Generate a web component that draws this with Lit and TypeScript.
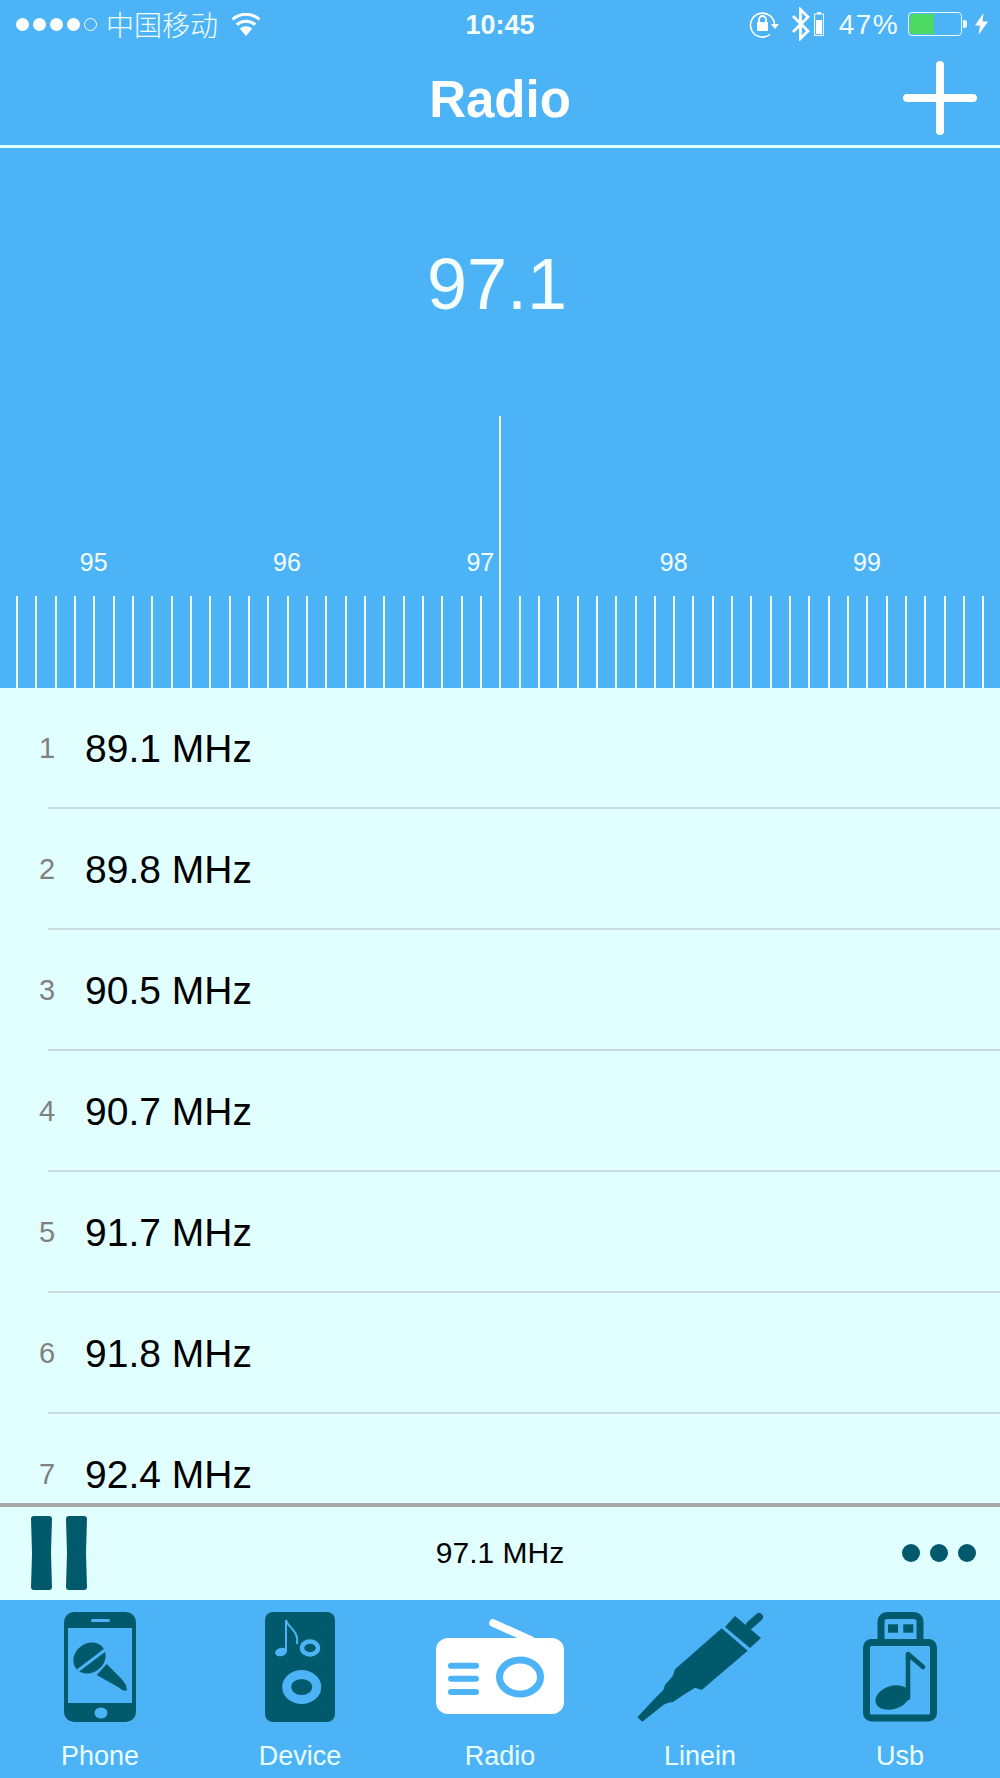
import { LitElement, html, css } from "lit";
import { customElement } from "lit/decorators.js";

const TEAL = "#005a6c";
const BLUE = "#4db3f7";

const stations = ["89.1", "89.8", "90.5", "90.7", "91.7", "91.8", "92.4"];
const scale = ["95", "96", "97", "98", "99"];

const phoneIcon = html`<svg width="72" height="110" viewBox="0 0 72 110">
  <rect width="72" height="110" rx="10" fill="${TEAL}"/>
  <rect x="4" y="16" width="64" height="75" fill="${BLUE}"/>
  <rect x="27" y="7" width="19" height="3" rx="1.5" fill="${BLUE}"/>
  <ellipse cx="37" cy="101" rx="6.5" ry="5.5" fill="${BLUE}"/>
  <path d="M42.7 52L32.7 63 54 75 59 78.5 63 78.5 62 73 58 67.5Z" fill="${TEAL}"/>
  <ellipse cx="25.5" cy="46" rx="17" ry="14.5" transform="rotate(-37 25.5 46)" fill="${TEAL}"/>
  <path d="M14 58.5L41 38" stroke="${BLUE}" stroke-width="3" fill="none"/>
</svg>`;

const deviceIcon = html`<svg width="70" height="110" viewBox="0 0 70 110">
  <rect width="70" height="110" rx="8" fill="${TEAL}"/>
  <ellipse cx="16" cy="40" rx="6" ry="4.2" transform="rotate(-15 16 40)" fill="${BLUE}"/>
  <path d="M21 40V8C23 16 34 18 32 32" stroke="${BLUE}" stroke-width="2" fill="none"/>
  <ellipse cx="45" cy="36" rx="8" ry="6.5" stroke="${BLUE}" stroke-width="4.5" fill="none"/>
  <ellipse cx="36.7" cy="75" rx="15" ry="12.5" stroke="${BLUE}" stroke-width="9" fill="none"/>
</svg>`;

const radioIcon = html`<svg width="128" height="96" viewBox="0 0 128 96">
  <path d="M57 4L95 21" stroke="#fff" stroke-width="7.5" stroke-linecap="round" fill="none"/>
  <rect y="19" width="128" height="76" rx="12" fill="#fff"/>
  <path d="M15 46.7H40M15 59.7H40M15 73H40" stroke="${BLUE}" stroke-width="6" stroke-linecap="round" fill="none"/>
  <ellipse cx="84" cy="58" rx="20.5" ry="17" stroke="${BLUE}" stroke-width="7" fill="none"/>
</svg>`;

const lineinIcon = html`<svg width="127" height="110" viewBox="0 0 127 110">
  <path d="M113 13L122 5" stroke="${TEAL}" stroke-width="8" stroke-linecap="round" fill="none"/>
  <path d="M98 4L124 26 113 36 88 15Z" fill="${TEAL}"/>
  <path d="M84.7 16.3L110.7 38.7 64.7 78 58 75.7 46.3 83 36.3 89.7 29.7 91.3 26.3 93 5.3 109.7 .3 105.3 18 86.3 26.3 78 28 73 35.7 64 38 57.3Z" fill="${TEAL}"/>
</svg>`;

const usbIcon = html`<svg width="74" height="110" viewBox="0 0 74 110">
  <rect x="18" y="3.5" width="39" height="32" rx="6" stroke="${TEAL}" stroke-width="7" fill="none"/>
  <rect x="25" y="12.3" width="10" height="8.4" fill="${TEAL}"/>
  <rect x="40.3" y="12.3" width="10" height="8.4" fill="${TEAL}"/>
  <rect x="3.5" y="30.5" width="67" height="75.5" rx="5" stroke="${TEAL}" stroke-width="7" fill="${BLUE}"/>
  <path d="M45 86V42L60 55" stroke="${TEAL}" stroke-width="4.6" stroke-linecap="round" stroke-linejoin="round" fill="none"/>
  <ellipse cx="29.5" cy="85.5" rx="17.5" ry="11.5" transform="rotate(-18 29.5 85.5)" fill="${TEAL}"/>
</svg>`;

const tabs = [
  { label: "Phone", icon: phoneIcon },
  { label: "Device", icon: deviceIcon },
  { label: "Radio", icon: radioIcon },
  { label: "Linein", icon: lineinIcon },
  { label: "Usb", icon: usbIcon },
];

const wifi = html`<svg width="30" height="23" viewBox="0 0 30 23">
  <path d="M15 23L8.8 15.6A9.5 9.5 0 0 1 21.2 15.6Z" fill="#fff"/>
  <path d="M5.8 11.6A14 14 0 0 1 24.2 11.6" stroke="#fff" stroke-width="3" fill="none"/>
  <path d="M1.5 6.4A20.5 20.5 0 0 1 28.5 6.4" stroke="#fff" stroke-width="3" fill="none"/>
</svg>`;

const lockIcon = html`<svg width="30" height="28" viewBox="0 0 30 28">
  <path d="M25.5 15.5A12 12 0 1 0 21 24.5" stroke="#fff" stroke-width="1.6" fill="none"/>
  <path d="M22 14H30L26 19Z" fill="#fff"/>
  <rect x="8" y="12" width="11" height="9" rx="1" fill="#fff"/>
  <path d="M10 12V9.5A3.5 3.5 0 0 1 17 9.5V12" stroke="#fff" stroke-width="1.8" fill="none"/>
</svg>`;

const btIcon = html`<svg width="20" height="34" viewBox="0 0 20 34">
  <path d="M2 9L17 24 9.5 31.5V2.5L17 10 2 25" stroke="#fff" stroke-width="2.8" fill="none"/>
</svg>`;

const miniBattery = html`<svg width="10" height="24" viewBox="0 0 10 24">
  <rect x="3" y="0" width="4" height="2" fill="#fff"/>
  <rect x=".6" y="2" width="8.8" height="21.4" fill="none" stroke="#fff" stroke-width="1"/>
  <rect x="2" y="8" width="6" height="14" fill="#fff"/>
</svg>`;

const bolt = html`<svg width="13" height="22" viewBox="0 0 13 22">
  <path d="M8.5 0L0 12.5H5L3.5 22 13 8.5H7.5Z" fill="#fff"/>
</svg>`;

const plus = html`<svg width="74" height="74" viewBox="0 0 74 74">
  <path d="M37 4V70M4 37H70" stroke="#fff" stroke-width="8" stroke-linecap="round" fill="none"/>
</svg>`;

const pause = html`<svg width="58" height="74" viewBox="0 0 58 74">
  <path d="M3 0H18C20 0 21 1 21 3L20 37 21 71C21 73 20 74 18 74H3C1 74 0 73 0 71L1 37 0 3C0 1 1 0 3 0Z" fill="${TEAL}"/>
  <path d="M38 0H53C55 0 56 1 56 3L55 37 56 71C56 73 55 74 53 74H38C36 74 35 73 35 71L36 37 35 3C35 1 36 0 38 0Z" fill="${TEAL}"/>
</svg>`;

@customElement("app-root")
export class AppRoot extends LitElement {
  static styles = css`
    :host {
      display: flex;
      flex-direction: column;
      width: 1000px;
      height: 1778px;
      overflow: hidden;
      background: #e2ffff;
      font-family: "Liberation Sans", Arial, sans-serif;
    }
    .top {
      background: #4db3f7;
      color: #fff;
      flex: none;
    }
    .status {
      display: grid;
      grid-template-columns: 1fr auto 1fr;
      align-items: center;
      height: 48px;
      padding: 0 13px;
      box-sizing: border-box;
      font-size: 28px;
      color: #eef;
    }
    .left, .right { display: flex; align-items: center; }
    .right { justify-content: flex-end; margin-right: -1px; }
    .signal { display: flex; gap: 4px; margin: 0 9px 0 3px; }
    .dot { width: 13px; height: 13px; border-radius: 50%; background: #fff; box-sizing: border-box; }
    .dot.off { background: none; border: 1px solid #fff; }
    .carrier { font-family: "Noto Sans CJK SC", sans-serif; font-weight: 300; font-size: 28px; line-height: 48px; color: #f2fdff; margin-right: 13px; }
    .clock { font-weight: 700; font-size: 27px; color: #f2fdff; padding-top: 2px; }
    .lock { margin-right: 12px; display: flex; }
    .bt { display: flex; margin-right: 3px; }
    .mini { display: flex; margin-right: 15px; }
    .pct { margin-right: 9px; color: #f2fdff; letter-spacing: 1.4px; padding-top: 2px; }
    .battery {
      width: 54px; height: 24px; border: 1px solid #e8fbff; border-radius: 4px;
      box-sizing: border-box; padding: 1px; margin-right: 1px;
    }
    .battery i { display: block; width: 24px; height: 100%; background: #4cd964; border-radius: 2px 0 0 2px; }
    .nub { width: 4px; height: 8px; background: #e8fbff; border-radius: 0 3px 3px 0; margin-right: 8px; }
    .nav {
      display: grid;
      grid-template-columns: 1fr auto 1fr;
      align-items: center;
      height: 95px;
      padding: 0 23px 2px;
      border-bottom: 3px solid #e2ffff;
    }
    .title { font-size: 51px; font-weight: 700; line-height: 95px; padding-top: 4px; }
    .plusbtn { justify-self: end; display: flex; }
    .tuner {
      position: relative;
      background: #4db3f7;
      height: 540px;
      flex: none;
      color: #f4feff;
      display: flex;
      flex-direction: column;
    }
    .freq { font-size: 72px; line-height: 80px; text-align: center; margin-top: 96px; padding-right: 6px; }
    .labels { display: flex; margin-top: 223px; height: 30px; }
    .labels span { flex: none; width: 193.33px; text-align: center; font-size: 25px; line-height: 30px; }
    .labels span:first-child { margin-left: -3px; }
    .ticks { display: flex; gap: 17.33px; padding-left: 16px; margin-top: 19px; height: 92px; overflow: hidden; }
    .ticks i { flex: none; width: 2px; height: 92px; background: #f0fdff; }
    .needle { position: absolute; left: 499px; top: 268px; bottom: 0; width: 2px; background: #f4feff; }
    .list { flex: 1; min-height: 0; overflow: hidden; background: #e2ffff; }
    .row { display: flex; height: 121px; box-sizing: border-box; position: relative; align-items: center; }
    .num { width: 38px; margin-left: 39px; font-size: 29px; color: #808080; }
    .name { margin-left: 8px; font-size: 39px; color: #000; }
    .row::after { content: ""; position: absolute; left: 48px; right: 0; bottom: 0; height: 2px; background: #cbdbdd; }
    .player {
      flex: none;
      height: 97px;
      box-sizing: border-box;
      border-top: 4px solid #a9a9a9;
      display: grid;
      grid-template-columns: 1fr auto 1fr;
      align-items: center;
      background: #e2ffff;
      padding: 0 24px 2px;
    }
    .pause { display: flex; margin-left: 7px; }
    .now { font-size: 30px; color: #000; }
    .more { display: flex; gap: 10px; justify-self: end; }
    .more i { width: 18px; height: 18px; border-radius: 50%; background: #005a6c; }
    .tabs {
      flex: none;
      height: 178px;
      background: #4db3f7;
      display: grid;
      grid-template-columns: repeat(5, 200px);
    }
    .tab { display: flex; flex-direction: column; align-items: center; padding-top: 12px; box-sizing: border-box; }
    .glyph { height: 110px; display: flex; align-items: center; justify-content: center; }
    .tab span { font-size: 27px; line-height: 34px; margin-top: 17px; color: #eaffff; }
  `;

  render() {
    const ticks = Array.from({ length: 51 }, (_, i) => i);
    return html`
      <div class="top">
        <div class="status">
          <div class="left">
            <div class="signal">
              <i class="dot"></i><i class="dot"></i><i class="dot"></i><i class="dot"></i><i class="dot off"></i>
            </div>
            <span class="carrier">中国移动</span>
            ${wifi}
          </div>
          <div class="clock">10:45</div>
          <div class="right">
            <span class="lock">${lockIcon}</span>
            <span class="bt">${btIcon}</span>
            <span class="mini">${miniBattery}</span>
            <span class="pct">47%</span>
            <div class="battery"><i></i></div>
            <div class="nub"></div>
            ${bolt}
          </div>
        </div>
        <div class="nav">
          <span></span>
          <div class="title">Radio</div>
          <div class="plusbtn">${plus}</div>
        </div>
      </div>
      <div class="tuner">
        <div class="freq">97.1</div>
        <div class="labels">${scale.map((s) => html`<span>${s}</span>`)}</div>
        <div class="ticks">${ticks.map(() => html`<i></i>`)}</div>
        <div class="needle"></div>
      </div>
      <div class="list">
        ${stations.map(
          (s, i) => html`<div class="row"><span class="num">${i + 1}</span><span class="name">${s} MHz</span></div>`
        )}
      </div>
      <div class="player">
        <div class="pause">${pause}</div>
        <div class="now">97.1 MHz</div>
        <div class="more"><i></i><i></i><i></i></div>
      </div>
      <div class="tabs">
        ${tabs.map((t) => html`<div class="tab"><div class="glyph">${t.icon}</div><span>${t.label}</span></div>`)}
      </div>
    `;
  }
}
